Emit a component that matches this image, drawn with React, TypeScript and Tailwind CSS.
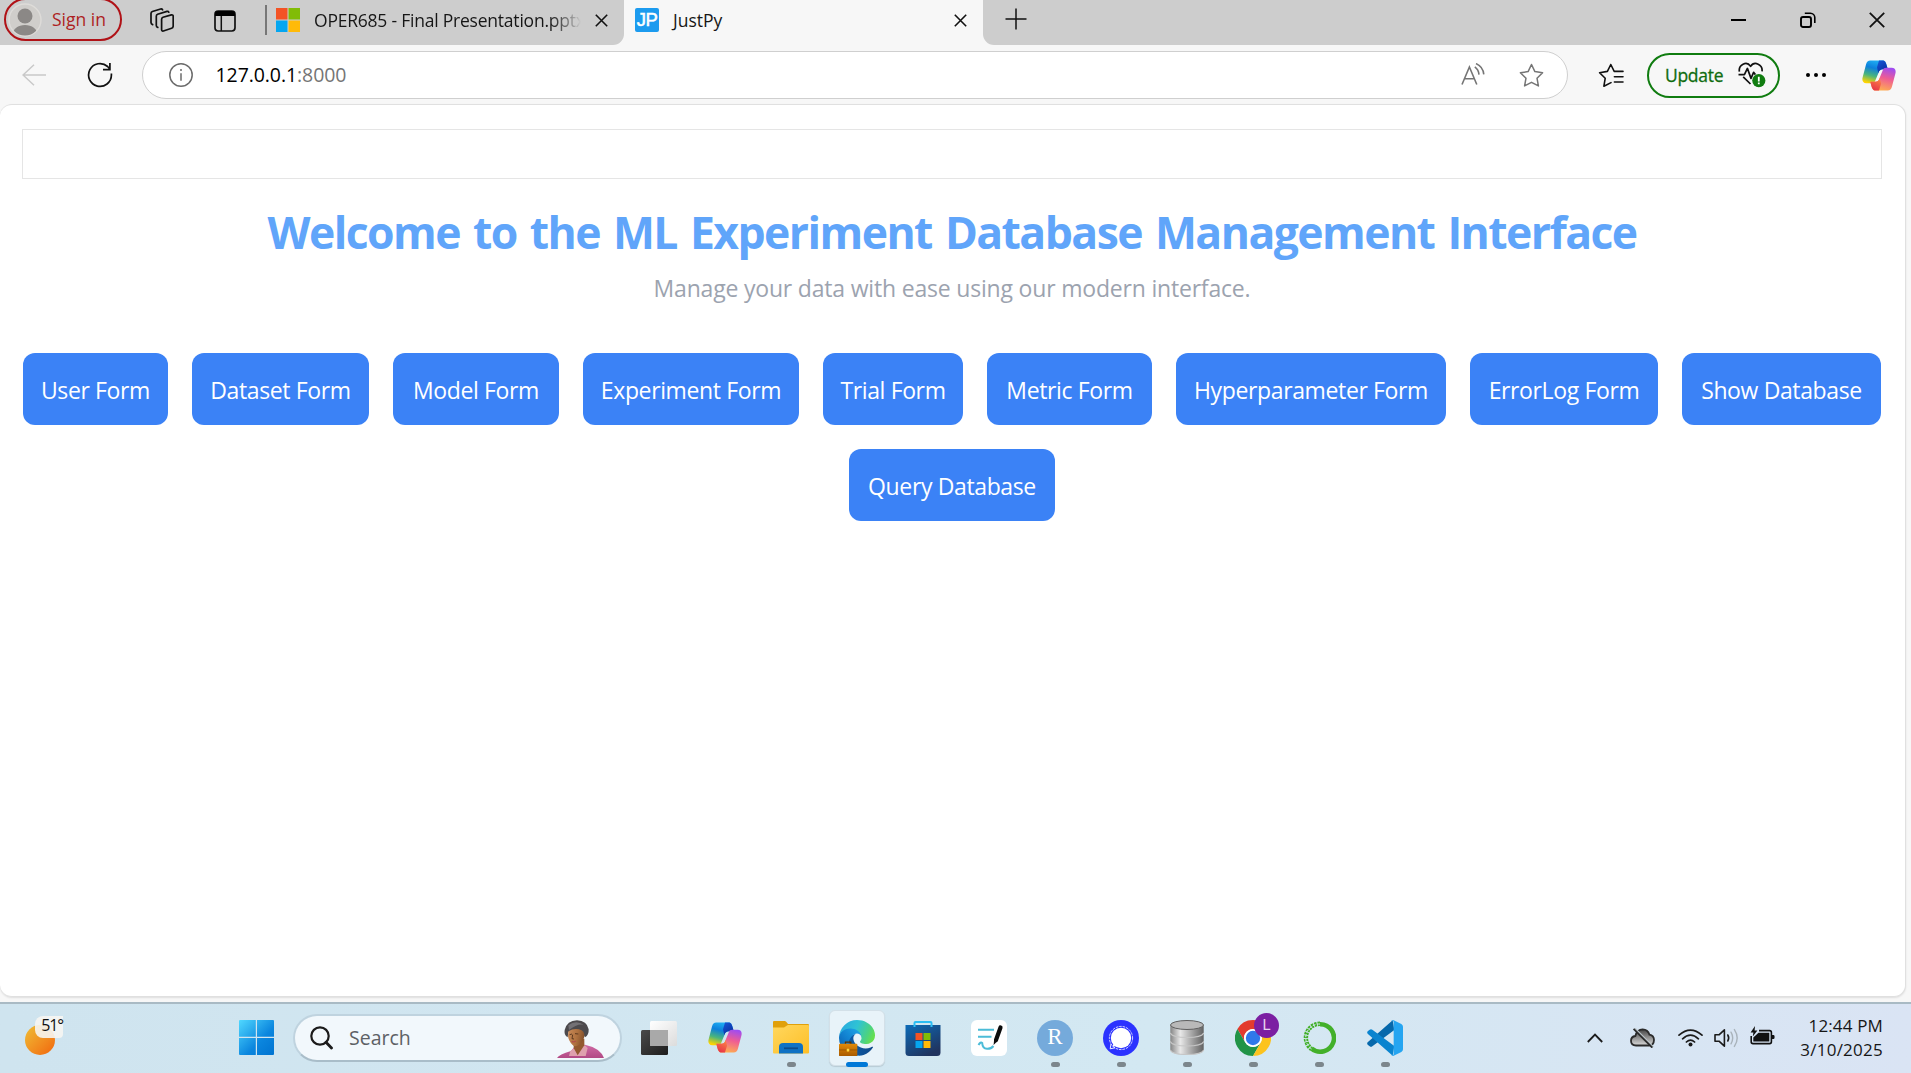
import type { ReactNode } from "react";

const FORMS = [
  { label: "User Form", width: "w-[145px]" },
  { label: "Dataset Form", width: "w-[177px]" },
  { label: "Model Form", width: "w-[166px]" },
  { label: "Experiment Form", width: "w-[216px]" },
  { label: "Trial Form", width: "w-[140px]" },
  { label: "Metric Form", width: "w-[165px]" },
  { label: "Hyperparameter Form", width: "w-[270px]" },
  { label: "ErrorLog Form", width: "w-[188px]" },
  { label: "Show Database", width: "w-[199px]" },
  { label: "Query Database", width: "w-[206px]" },
];

function MicrosoftLogo({ size }: { size: number }) {
  return (
    <svg width={size} height={size} viewBox="0 0 24 24" className="shrink-0">
      <path fill="#f35325" d="M0 0h11.5v11.5H0z" />
      <path fill="#81bc06" d="M12.5 0H24v11.5H12.5z" />
      <path fill="#05a6f0" d="M0 12.5h11.5V24H0z" />
      <path fill="#ffba08" d="M12.5 12.5H24V24H12.5z" />
    </svg>
  );
}

function CopilotLogo({ id }: { id: string }) {
  const ribbon =
    "M24 0H60C68 0 71 5 74 18L76 26H62C54 26 51 29 48 38L39 60C37 66 34 68 28 68H12C2 68 -2 60 1 50L11 12C13 4 17 0 24 0Z";
  const fold = "M50 0H60C68 0 71 5 74 18L76 26H62C54 26 51 29 48 38L44 20Z";
  return (
    <svg width="34" height="31" viewBox="-1 -1 102 92" className="shrink-0">
      <defs>
        <linearGradient id={id + "a"} x1="0.6" y1="0" x2="0.3" y2="1">
          <stop offset="0" stopColor="#1fb0f5" />
          <stop offset="0.35" stopColor="#0d7fdb" />
          <stop offset="0.68" stopColor="#4ab57c" />
          <stop offset="1" stopColor="#ffd400" />
        </linearGradient>
        <linearGradient id={id + "b"} x1="0" y1="0" x2="0.6" y2="1">
          <stop offset="0" stopColor="#1657d8" />
          <stop offset="1" stopColor="#0a2fa0" />
        </linearGradient>
        <linearGradient id={id + "c"} x1="0.3" y1="1" x2="0.6" y2="0">
          <stop offset="0" stopColor="#a04cf0" />
          <stop offset="0.45" stopColor="#ef5d93" />
          <stop offset="1" stopColor="#ffb04f" />
        </linearGradient>
        <linearGradient id={id + "d"} x1="0" y1="1" x2="0.4" y2="0">
          <stop offset="0" stopColor="#ff8b45" />
          <stop offset="1" stopColor="#e83a48" />
        </linearGradient>
      </defs>
      <path d={ribbon} fill={`url(#${id}a)`} />
      <path d={fold} fill={`url(#${id}b)`} />
      <g transform="rotate(180 50 45)">
        <path d={ribbon} fill={`url(#${id}c)`} />
        <path d={fold} fill={`url(#${id}d)`} />
      </g>
    </svg>
  );
}

function CloseIcon({ size, stroke = 1.6 }: { size: number; stroke?: number }) {
  return (
    <svg width={size} height={size} viewBox={`0 0 ${size} ${size}`} className="shrink-0">
      <path d={`M.8.8 ${size - 0.8} ${size - 0.8}M${size - 0.8} .8.8 ${size - 0.8}`} stroke="#111" strokeWidth={stroke} fill="none" />
    </svg>
  );
}

function TabStrip() {
  return (
    <div className="flex h-[45px] items-start bg-[#cdcdcd]">
      <div className="-mt-[2px] ml-1 flex h-[43px] w-[118px] shrink-0 items-center rounded-full border-2 border-[#b01217] pl-[2px]">
        <svg width="34" height="34" viewBox="0 0 34 34" className="shrink-0">
          <defs>
            <clipPath id="avatar">
              <circle cx="17" cy="17" r="15.5" />
            </clipPath>
          </defs>
          <circle cx="17" cy="17" r="16" fill="#d0cecb" stroke="#dedcd9" strokeWidth="1.4" />
          <g clipPath="url(#avatar)" fill="#8b8886">
            <circle cx="17" cy="13" r="7.5" />
            <path d="M4 34c0-8 6-12 13-12s13 4 13 12z" />
          </g>
        </svg>
        <span className="ml-[10px] text-[17.5px] whitespace-nowrap text-[#ad1f23]">Sign in</span>
      </div>
      <svg width="24" height="24" viewBox="0 0 24 24" className="mt-2 ml-[28px] shrink-0" fill="none" stroke="#111" strokeWidth="1.7" strokeLinejoin="round" strokeLinecap="round">
        <path d="M13 9.3 21.4 6.9Q23.2 6.6 23.2 8.3V18Q23.1 19.8 21.6 20.3L13.4 23Q11.7 23.4 11.6 21.8V11.2Q11.7 9.8 13 9.3Z" />
        <path d="M7.8 19.4Q6.3 18.9 6.3 17.4V8.2Q6.3 6.8 7.6 6.3L17 3.4Q18.4 3.1 18.8 4.2" />
        <path d="M2.6 16.6Q1 16 1 14.4V5.4Q1 4 2.4 3.5L10.6 1Q12 .7 12.6 1.8" />
      </svg>
      <svg width="22" height="22" viewBox="0 0 22 22" className="mt-[9.5px] ml-10 shrink-0">
        <rect x="1" y="1" width="20" height="20" rx="3.2" fill="none" stroke="#111" strokeWidth="1.7" />
        <path d="M1 6V4a3 3 0 0 1 3-3h14a3 3 0 0 1 3 3v2z" fill="#000" />
        <path d="M7.3 6v15" stroke="#111" strokeWidth="1.5" />
      </svg>
      <div className="mt-[5px] ml-[29px] h-[30px] w-[1.5px] shrink-0 bg-[#777]" />
      <div className="flex h-10 w-[357.5px] shrink-0 items-center pl-[9.5px]">
        <MicrosoftLogo size={24} />
        <span className="ml-[14px] w-[267px] overflow-hidden bg-linear-to-r from-[#161616] from-88% to-[#cdcdcd] bg-clip-text text-[17.5px] tracking-[-0.22px] whitespace-nowrap text-transparent">
          OPER685 - Final Presentation.pptx
        </span>
        <span className="ml-[14px]">
          <CloseIcon size={13} />
        </span>
      </div>
      <div className="relative flex h-[45px] w-[359px] shrink-0 items-center bg-[#f7f7f7] pb-[5px]">
        <svg width="11" height="11" className="absolute bottom-0 -left-[11px]">
          <path d="M11 0V11H0A11 11 0 0 0 11 0Z" fill="#f7f7f7" />
        </svg>
        <svg width="11" height="11" className="absolute -right-[11px] bottom-0">
          <path d="M0 0V11H11A11 11 0 0 1 0 0Z" fill="#f7f7f7" />
        </svg>
        <span className="ml-[11px] flex h-6 w-6 items-center justify-center rounded-[2px] bg-[#1c9bef] font-['Liberation_Sans'] text-[18.5px] tracking-[-0.5px] text-white [-webkit-text-stroke:0.5px_white]">
          JP
        </span>
        <span className="ml-[14px] w-[281px] text-[17.5px] text-[#161616]">JustPy</span>
        <CloseIcon size={13} />
      </div>
      <svg width="22" height="22" viewBox="0 0 22 22" className="mt-[8px] ml-[22px] shrink-0">
        <path d="M11 .5v21M.5 11h21" stroke="#111" strokeWidth="1.5" />
      </svg>
      <div className="ml-auto flex h-[39px] items-center">
        <span className="flex w-[69px] justify-center">
          <span className="h-[2px] w-[15px] bg-black" />
        </span>
        <span className="flex w-[69px] justify-center">
          <svg width="16" height="16" viewBox="0 0 16 16" fill="none" stroke="#000" strokeWidth="1.9">
            <rect x="1" y="5" width="10" height="10" rx="2" />
            <path d="M4.8 1.2H10.4a4.4 4.4 0 0 1 4.4 4.4V11" strokeWidth="1.6" />
          </svg>
        </span>
        <span className="flex w-[69px] justify-center">
          <CloseIcon size={16} stroke={1.8} />
        </span>
      </div>
    </div>
  );
}

function Toolbar() {
  return (
    <div className="flex h-[59px] items-center bg-[#f7f7f7] pt-px">
      <svg width="25" height="22" viewBox="0 0 25 22" className="ml-[22px] shrink-0" fill="none" stroke="#c9c9c9" strokeWidth="1.5">
        <path d="M24 11H1M12 .8 1 11 12 21.2" />
      </svg>
      <svg width="26" height="26" viewBox="0 0 26 26" className="ml-10 shrink-0" fill="none" stroke="#111" strokeWidth="1.7">
        <path d="M24.4 11.6V13A11.4 11.4 0 1 1 20.6 4.5L22.6 6.7M16 7.6H22.9V1" />
      </svg>
      <div className="ml-[29px] flex h-12 w-[1426px] shrink-0 items-center rounded-full border-[1.5px] border-[#cfcfcf] bg-white pl-[25.5px]">
        <svg width="24" height="24" viewBox="0 0 24 24" className="shrink-0">
          <circle cx="12" cy="12" r="11.2" fill="none" stroke="#6b6b6b" strokeWidth="1.5" />
          <path d="M12 10.2v7.6" stroke="#6b6b6b" strokeWidth="1.5" />
          <circle cx="12" cy="7" r="1" fill="#6b6b6b" />
        </svg>
        <span className="ml-[23px] text-[19.5px] tracking-[-0.08px] text-black">
          127.0.0.1<span className="text-[#757575]">:8000</span>
        </span>
        <svg width="24" height="24" viewBox="0 0 24 24" className="ml-auto shrink-0" fill="none" stroke="#757575" strokeWidth="1.6">
          <path d="M1 21.5 8.4 4 15.8 21.5M3.6 15.8H13.2" />
          <path d="M13.8 3.8Q17.6 6.6 18 11.6M15 .6Q22 3.6 22.8 11.4" />
        </svg>
        <svg width="25" height="25" viewBox="0 0 25 25" className="mr-[23.5px] ml-[34px] shrink-0" fill="none" stroke="#757575" strokeWidth="1.5" strokeLinejoin="round">
          <path d="M12.5 1.5 15.9 8.6 23.6 9.7 18 15.2 19.4 22.9 12.5 19.3 5.6 22.9 7 15.2 1.4 9.7 9.1 8.6Z" />
        </svg>
      </div>
      <svg width="26" height="25" viewBox="0 0 26 25" className="ml-[30px] shrink-0" fill="none" stroke="#111" strokeWidth="1.6" strokeLinejoin="round" strokeLinecap="round">
        <path d="M16.2 8.4 12.8 1.5 9.4 8.4 1.6 9.7 7.2 15.3 5.9 23.2 13 19.6M16.2 8.4H25M16.4 13.7H25M16.4 19H25" />
      </svg>
      <div className="ml-[23px] flex h-[45px] w-[133px] shrink-0 items-center rounded-full border-2 border-[#107c10] pl-[16px]">
        <span className="w-[73px] text-[17.5px] tracking-[-0.3px] text-[#0f6c0f] [-webkit-text-stroke:0.3px_#0f6c0f]">Update</span>
        <svg width="28" height="26" viewBox="0 0 28 26" className="shrink-0" fill="none" stroke="#111" strokeWidth="1.7" strokeLinejoin="round">
          <path d="M1.4 9.6C.2 3 8.6-1.6 12.6 4.4 16.6-1.6 25 3 24 9.4M5.2 14.8 12.5 22" />
          <path d="M.5 12.6H6.4L9.4 6.4 13 16.4 15.6 10.4 17.4 12.6" />
          <circle cx="20.8" cy="18.6" r="6.6" fill="#107c10" stroke="none" />
          <path d="M20.8 14.8V19.4M20.8 20.6V22.2" stroke="#fff" strokeWidth="1.8" />
        </svg>
      </div>
      <svg width="22" height="6" viewBox="0 0 22 6" className="ml-[25px] shrink-0" fill="#000">
        <circle cx="3" cy="3" r="2" />
        <circle cx="11" cy="3" r="2" />
        <circle cx="19" cy="3" r="2" />
      </svg>
      <span className="ml-[35px]">
        <CopilotLogo id="bar" />
      </span>
    </div>
  );
}

function Page() {
  return (
    <div className="h-[898px] bg-[#f7f7f7] pr-[5px]">
      <main className="h-[893px] rounded-xl border-y border-r border-[#e0e0e0] bg-white px-[22px] pt-6 pr-[23px] shadow-[0_1px_2px_rgba(0,0,0,0.1)]">
        <div className="h-[50px] w-[1860px] border border-[#e5e5e5]" />
        <h1 className="mt-[23px] text-center text-[44.5px] leading-[60px] font-bold tracking-[-1.55px] whitespace-nowrap text-[#60a5fa] [word-spacing:3px]">
          Welcome to the ML Experiment Database Management Interface
        </h1>
        <p className="mt-2 text-center text-[23px] leading-9 tracking-[-0.19px] text-[#9ca3af]">
          Manage your data with ease using our modern interface.
        </p>
        <div className="mt-[47px] flex flex-wrap justify-center gap-6">
          {FORMS.map((form) => (
            <button
              key={form.label}
              className={`${form.width} h-[72px] shrink-0 rounded-xl bg-[#3b82f6] pt-[3px] text-[23px] tracking-[-0.37px] whitespace-nowrap text-white`}
            >
              {form.label}
            </button>
          ))}
        </div>
      </main>
    </div>
  );
}

function TaskItem({ children, state }: { children: ReactNode; state?: "running" | "active" }) {
  return (
    <div className="relative flex h-full w-[66px] shrink-0 items-center justify-center">
      <div className={state === "active" ? "flex h-14 w-14 items-center justify-center rounded-md border border-[#d3e0e8] bg-[#e8f3f9] shadow-[0_1px_1px_rgba(0,0,0,0.12)]" : "flex"}>
        {children}
      </div>
      {state === "running" && <span className="absolute bottom-[4px] left-[29px] h-[5px] w-[9px] rounded-full bg-[#7c868c]" />}
      {state === "active" && <span className="absolute bottom-[4px] left-[22px] h-[5px] w-[22px] rounded-full bg-[#0078d7]" />}
    </div>
  );
}

function WindowsLogo() {
  return (
    <svg width="35" height="35" viewBox="0 0 35 35" className="shrink-0">
      <defs>
        <linearGradient id="win" x1="0" y1="0" x2="1" y2="1">
          <stop offset="0" stopColor="#50d8ff" />
          <stop offset="0.6" stopColor="#0b86de" />
          <stop offset="1" stopColor="#0073d0" />
        </linearGradient>
      </defs>
      <path fill="url(#win)" d="M1 0H16.8V16.8H0V1Q0 0 1 0ZM18 0H34Q35 0 35 1V16.8H18ZM0 18H16.8V35H1Q0 35 0 34ZM18 18H35V34Q35 35 34 35H18Z" />
    </svg>
  );
}

function SearchPortrait() {
  return (
    <svg width="47" height="38" viewBox="0 0 141 114" className="shrink-0">
      <defs>
        <linearGradient id="coat" x1="0" y1="0" x2="0" y2="1">
          <stop offset="0" stopColor="#cf6aa4" />
          <stop offset="1" stopColor="#b24a85" />
        </linearGradient>
        <linearGradient id="face" x1="0" y1="0" x2="1" y2="0.2">
          <stop offset="0" stopColor="#c98a58" />
          <stop offset="0.6" stopColor="#ae713f" />
          <stop offset="1" stopColor="#87532c" />
        </linearGradient>
      </defs>
      <path d="M0 114Q6 104 42 93L54 78 84 74Q130 84 141 114Z" fill="url(#coat)" />
      <path d="M40 93 52 84 60 100 82 74 92 84 86 108H36Z" fill="#dfa0ae" />
      <path d="M50 62 82 56V76L62 106 50 84Z" fill="#93592f" />
      <path d="M23 30Q30 2 60 1 90 2 95 28 96 46 84 52L74 34 34 36 32 52Q20 46 23 30Z" fill="#4c4a4d" />
      <path d="M34 34Q50 24 66 28 84 32 82 50 78 66 64 76 54 82 46 74 34 62 33 48Z" fill="url(#face)" />
      <path d="M38 44l7-2M54 41l10 1M47 44l-2 12 6 1" stroke="#4f2f18" strokeWidth="2.6" fill="none" />
      <path d="M44 64q6 4 13-1" stroke="#b0504a" strokeWidth="4" fill="none" />
      <path d="M34 16Q56-2 80 14 60 10 36 30Z" fill="#737175" />
    </svg>
  );
}

function TaskViewIcon() {
  return (
    <svg width="36" height="34" viewBox="0 0 36 34">
      <defs>
        <linearGradient id="tvd" x1="0" y1="0" x2="1" y2="1">
          <stop offset="0" stopColor="#4a4a4a" />
          <stop offset="1" stopColor="#1d1d1d" />
        </linearGradient>
        <linearGradient id="tvl" x1="0" y1="0" x2="1" y2="1">
          <stop offset="0" stopColor="#fff" />
          <stop offset="1" stopColor="#dcdcdc" />
        </linearGradient>
      </defs>
      <rect y="9" width="27" height="25" rx="1.5" fill="url(#tvd)" />
      <rect x="9" width="27" height="25" rx="1.5" fill="url(#tvl)" />
      <path d="M9 9H27V25H10Q9 25 9 24Z" fill="#a9a9a9" />
    </svg>
  );
}

function FolderIcon() {
  return (
    <svg width="36" height="33" viewBox="0 0 36 33">
      <defs>
        <linearGradient id="fold" x1="0" y1="0" x2="1" y2="1">
          <stop offset="0" stopColor="#ffd75e" />
          <stop offset="1" stopColor="#fdbf27" />
        </linearGradient>
      </defs>
      <path d="M1 0H11.5Q12.5 0 13.2.8L15 3H35Q36 3 36 4V12H0V1Q0 0 1 0Z" fill="#e0a00b" />
      <path d="M0 6.5H11L14.8 4H35Q36 4 36 5V31.5Q36 32.5 35 32.5H1Q0 32.5 0 31.5Z" fill="url(#fold)" />
      <path d="M6 32.5V26Q6 22 10 22H26Q30 22 30 26V32.5Z" fill="#0f72c4" />
      <path d="M11 27.3H25" stroke="#0a4c8c" strokeWidth="1.8" />
    </svg>
  );
}

function EdgeIcon() {
  return (
    <svg width="36" height="36" viewBox="0 0 256 256">
      <defs>
        <linearGradient id="ed1" x1="0.2" y1="0.5" x2="1" y2="0.6">
          <stop offset="0" stopColor="#0c59a4" />
          <stop offset="1" stopColor="#114a8b" />
        </linearGradient>
        <linearGradient id="ed2" x1="0.8" y1="0.2" x2="0.2" y2="0.9">
          <stop offset="0" stopColor="#1b9de2" />
          <stop offset="0.5" stopColor="#1180cf" />
          <stop offset="1" stopColor="#0a5fb0" />
        </linearGradient>
        <linearGradient id="ed3" x1="0" y1="0.3" x2="1" y2="0.6">
          <stop offset="0" stopColor="#2aa9e0" />
          <stop offset="0.45" stopColor="#2fc3d4" />
          <stop offset="0.8" stopColor="#4bd283" />
          <stop offset="1" stopColor="#66e04c" />
        </linearGradient>
        <linearGradient id="case" x1="0" y1="0" x2="0" y2="1">
          <stop offset="0" stopColor="#e38b08" />
          <stop offset="1" stopColor="#a85a00" />
        </linearGradient>
      </defs>
      <path fill="url(#ed1)" d="M235.68 190.54c-3.46 1.82-7.04 3.42-10.69 4.83a101.39 101.39 0 0 1-35.63 6.43c-46.95 0-87.84-32.29-87.84-73.74a31.15 31.15 0 0 1 16.3-27.04C75.35 102.8 64.43 147.05 64.43 172.98c0 73.31 67.57 80.75 82.13 80.75 7.85 0 19.69-2.29 26.8-4.54l1.3-.43a128.34 128.34 0 0 0 66.61-52.76 4.02 4.02 0 0 0-5.59-5.46Z" />
      <path fill="url(#ed2)" d="M105.73 241.42a79.2 79.2 0 0 1-22.74-21.34 80.93 80.93 0 0 1 29.5-120.19c3.12-1.47 8.45-4.12 15.54-3.99a32.35 32.35 0 0 1 25.69 13 31.88 31.88 0 0 1 6.36 18.66c0-.21 24.46-79.6-80-79.6-43.9 0-80 41.66-80 78.21a130.15 130.15 0 0 0 12.11 56 128 128 0 0 0 156.38 67.11 75.55 75.55 0 0 1-62.78-7.89Z" />
      <path fill="url(#ed3)" d="M152.33 148.86c-.81 1.05-3.3 2.5-3.3 5.66 0 2.61 1.7 5.12 4.72 7.23 14.38 10 41.49 8.68 41.56 8.68a59.56 59.56 0 0 0 30.27-8.35 61.38 61.38 0 0 0 30.43-52.88c.26-22.41-8-37.31-11.34-43.91C223.44 23.84 177.72 0 128 0A128 128 0 0 0 0 126.2c.48-36.54 36.8-66.05 80-66.05 3.5 0 23.46.34 42 10.07 16.34 8.58 24.9 18.94 30.85 29.21 6.18 10.67 7.28 24.15 7.28 29.52 0 5.37-2.74 13.33-7.8 19.91Z" />
      <path d="M46 170V158H84V170" fill="none" stroke="#5b3200" strokeWidth="9" />
      <rect y="168" width="130" height="88" rx="6" fill="url(#case)" />
      <path d="M0 213H130" stroke="#8a4a00" strokeWidth="5" />
      <rect x="55" y="204" width="18" height="20" rx="3" fill="#ffd73d" />
    </svg>
  );
}

function StoreIcon() {
  return (
    <svg width="36" height="36" viewBox="0 0 36 36">
      <defs>
        <linearGradient id="store" x1="0" y1="0" x2="0.6" y2="1">
          <stop offset="0" stopColor="#0d6cb8" />
          <stop offset="1" stopColor="#20345f" />
        </linearGradient>
      </defs>
      <path d="M.5 5H35.5V32.5Q35.5 36 32 36H4Q.5 36 .5 32.5Z" fill="url(#store)" />
      <path d="M9.5 7V3Q9.5 2 10.5 2H25.5Q26.5 2 26.5 3V7" fill="none" stroke="#2cbdf3" strokeWidth="2" />
      <path fill="#f35325" d="M10.5 13h7v7h-7z" />
      <path fill="#81bc06" d="M18.5 13h7v7h-7z" />
      <path fill="#05a6f0" d="M10.5 21h7v7h-7z" />
      <path fill="#ffba08" d="M18.5 21h7v7h-7z" />
    </svg>
  );
}

function NotesIcon() {
  return (
    <svg width="36" height="36" viewBox="0 0 36 36">
      <rect width="36" height="36" rx="6" fill="#fff" />
      <path d="M7 9.8H23M7 16.8H20.5M7.5 25Q9.5 21.5 11.2 23 11.5 28.6 16 28.8 20 29 22.5 26" fill="none" stroke="#4cbcd8" strokeWidth="2" />
      <path d="M29.5 7.5 25 20" stroke="#0c0c0c" strokeWidth="4.2" strokeLinecap="round" />
      <path d="M23.2 19 22.6 25 27 20.4Z" fill="#0c0c0c" />
    </svg>
  );
}

function SignalIcon() {
  return (
    <svg width="36" height="36" viewBox="0 0 36 36">
      <circle cx="18" cy="18" r="18" fill="#2b32ff" />
      <circle cx="18" cy="18" r="10.2" fill="#fff" />
      <path d="M11 23 9.4 26.8 14 26Z" fill="#fff" />
      <circle cx="18" cy="18" r="11.6" fill="none" stroke="#fff" strokeWidth=".8" strokeDasharray="2.6 .9" />
      <path d="M8 24 7.2 28.8 12 27.8" fill="none" stroke="#fff" strokeWidth=".9" />
    </svg>
  );
}

function DatabaseIcon() {
  return (
    <svg width="34" height="35" viewBox="0 0 34 35">
      <defs>
        <linearGradient id="db" x1="0" y1="0" x2="1" y2="0">
          <stop offset="0" stopColor="#858585" />
          <stop offset="0.3" stopColor="#e8e8e8" />
          <stop offset="1" stopColor="#616161" />
        </linearGradient>
      </defs>
      {[22, 13.5, 5].map((y) => (
        <g key={y} transform={`translate(0 ${y})`}>
          <path d="M.3 0V8Q2 12.5 17 12.5T33.7 8V0Z" fill="url(#db)" />
          <path d="M.3 8Q2 12.5 17 12.5T33.7 8" fill="none" stroke="#c6c6c6" strokeWidth="1.1" />
        </g>
      ))}
      <ellipse cx="17" cy="5" rx="16.5" ry="4.5" fill="#b9b9b9" stroke="#5f5f5f" strokeWidth="1" />
    </svg>
  );
}

function ChromeIcon() {
  return (
    <div className="relative">
      <svg width="36" height="36" viewBox="0 0 48 48">
        <path fill="#e33b2e" d="M44.785 12A24 24 0 0 0 3.215 12L13.61 30A12 12 0 0 1 24 12Z" />
        <path fill="#219447" d="M3.215 12A24 24 0 0 0 24 48L34.39 30A12 12 0 0 1 13.61 30Z" />
        <path fill="#fcc31e" d="M24 48A24 24 0 0 0 44.785 12H24A12 12 0 0 1 34.39 30Z" />
        <circle cx="24" cy="24" r="12" fill="#fff" />
        <circle cx="24" cy="24" r="9.6" fill="#2f78ea" />
      </svg>
      <span className="absolute -top-[7px] left-[19px] flex h-[25px] w-[25px] items-center justify-center rounded-full bg-[#7b1fa2] font-[Roboto] text-[15px] text-[#e6d3ee]">L</span>
    </div>
  );
}

function CondaIcon() {
  return (
    <svg width="33" height="34" viewBox="0 0 33 34">
      <path d="M17 3.3A13.7 13.7 0 1 1 8.5 27.5" fill="none" stroke="#43b02a" strokeWidth="4.6" />
      <path d="M17 2.8A14 14 0 0 0 8.5 28" fill="none" stroke="#43b02a" strokeWidth="4.4" strokeDasharray="2.4 .9" />
      <path d="M17 3A13.8 13.8 0 0 0 8.5 28" fill="none" stroke="#d3e7f0" strokeWidth="1" strokeDasharray="3 1.6" />
    </svg>
  );
}

function VsCodeIcon() {
  return (
    <svg width="36" height="36" viewBox="0 0 108 108">
      <path d="M77 1 82 30 16 79Q12 82 8 79L2 74Q-1 70 2 67Z" fill="#0668ab" />
      <path d="M77 107 82 78 16 29Q12 26 8 29L2 34Q-1 38 2 41Z" fill="#0a84cf" />
      <path d="M80 1 103 12Q108 15 108 20V88Q108 93 103 96L80 107Q75 109 72 105 80 110 80 100V8Q80-2 72 3 76-1 80 1Z" fill="#25a5f1" />
    </svg>
  );
}

function Taskbar() {
  return (
    <div className="flex h-[71px] items-center border-t-2 border-[#a9bac4] bg-linear-to-r from-[#cfe4ef] via-[#d3e8f2] via-60% to-[#dae4f4] pb-[2px]">
      <div className="relative ml-6 h-[44px] w-10 shrink-0">
        <div className="absolute top-[9px] left-[1px] h-[30px] w-[30px] rounded-full bg-linear-to-br from-[#edbd35] to-[#f0640a]" />
        <div className="absolute top-0 left-[11px] flex h-[22px] w-[28px] items-center justify-end rounded-l-lg rounded-br-sm bg-[#f6f5f2]/90 pb-[4px] text-[16px] tracking-[-1.1px] text-[#111]">
          51°
        </div>
      </div>
      <div className="ml-[175px]">
        <WindowsLogo />
      </div>
      <div className="ml-[19px] flex h-[48px] w-[329px] shrink-0 items-center rounded-full border-2 border-[#bfd3df] border-b-[#a9bdc9] bg-[#f2f8fc] pl-[15px]">
        <svg width="23" height="24" viewBox="0 0 23 24" fill="none" stroke="#1b1b1b" strokeWidth="2.2" strokeLinecap="round">
          <circle cx="10" cy="10" r="8.7" />
          <path d="M16 16.2 21.5 22" strokeWidth="2.8" />
        </svg>
        <span className="ml-[16px] text-[19.5px] text-[#5d6165]">Search</span>
        <span className="mt-[2px] mr-[16px] ml-auto">
          <SearchPortrait />
        </span>
      </div>
      <div className="ml-1 flex h-full">
        <TaskItem><TaskViewIcon /></TaskItem>
        <TaskItem><CopilotLogo id="task" /></TaskItem>
        <TaskItem state="running"><FolderIcon /></TaskItem>
        <TaskItem state="active"><EdgeIcon /></TaskItem>
        <TaskItem><StoreIcon /></TaskItem>
        <TaskItem><NotesIcon /></TaskItem>
        <TaskItem state="running">
          <span className="flex h-9 w-9 items-center justify-center rounded-full bg-[#75aadb] font-['Liberation_Serif'] text-[23px] text-white">R</span>
        </TaskItem>
        <TaskItem state="running"><SignalIcon /></TaskItem>
        <TaskItem state="running"><DatabaseIcon /></TaskItem>
        <TaskItem state="running"><ChromeIcon /></TaskItem>
        <TaskItem state="running"><CondaIcon /></TaskItem>
        <TaskItem state="running"><VsCodeIcon /></TaskItem>
      </div>
      <div className="mr-[28px] ml-auto flex items-center">
        <svg width="16" height="10" viewBox="0 0 16 10" fill="none" stroke="#1b1b1b" strokeWidth="1.8">
          <path d="M.8 9 8 1.6 15.2 9" />
        </svg>
        <svg width="25" height="20" viewBox="0 0 25 20" className="ml-[27px]">
          <defs>
            <linearGradient id="cloud" x1="0" y1="0" x2="0" y2="1">
              <stop offset="0" stopColor="#444" />
              <stop offset="1" stopColor="#d9d9d9" />
            </linearGradient>
          </defs>
          <path d="M6 17.5Q1 17.5 1 12.8 1 8.6 5.4 8 7 1.5 12.6 1.4 17.8 1.6 19.4 6.6 24 7.4 24 12 23.8 17.3 19 17.5Z" fill="url(#cloud)" stroke="#2b2b2b" strokeWidth="1.8" />
          <path d="M4.8 .2 23.3 19" stroke="#bcc6cc" strokeWidth="1.6" />
          <path d="M3.6 .8 22.3 19.6" stroke="#2b2b2b" strokeWidth="1.9" />
        </svg>
        <svg width="25" height="18" viewBox="0 0 25 18" className="ml-[23px]" fill="none" stroke="#1b1b1b" strokeWidth="1.7" strokeLinecap="round">
          <path d="M1 6.2Q12.5-4 24 6.2M4.6 9.8Q12.5 2.6 20.4 9.8M8.4 13Q12.5 9.2 16.6 13" />
          <circle cx="12.5" cy="15.6" r="2" fill="#1b1b1b" stroke="none" />
        </svg>
        <svg width="25" height="20" viewBox="0 0 25 20" className="ml-[11px]" fill="none" stroke="#1b1b1b" strokeWidth="1.6" strokeLinecap="round" strokeLinejoin="round">
          <path d="M1 6.8H5L10.4 1.8V18.2L5 13.2H1Z" />
          <path d="M13.8 7Q15.6 10 13.8 13" />
          <path d="M17 4.2Q20.4 10 17 15.8M20.4 1.6Q26 10 20.4 18.4" stroke="#a9b3bb" strokeWidth="1.4" />
        </svg>
        <svg width="25" height="20" viewBox="0 0 25 20" className="-mt-1 ml-[11px]">
          <path d="M9 4.6H19.6Q21.4 4.6 21.4 6.4V15.8Q21.4 17.6 19.6 17.6H3Q1.2 17.6 1.2 15.8V10" fill="none" stroke="#111" strokeWidth="1.6" />
          <path d="M8.5 6.8H19.3V15.4H3.3V11.6Z" fill="#111" />
          <path d="M22 9H23.6Q24.6 9 24.6 11T23.6 13H22Z" fill="#111" />
          <path d="M5 0 .6 6.4H3.4L2.8 10.6 7.4 4.6H4.6Z" fill="#111" />
        </svg>
        <div className="ml-[25px] text-right text-[17px] leading-6 text-[#161616]">
          <div className="tracking-[0.15px]">12:44 PM</div>
          <div className="tracking-[0.25px]">3/10/2025</div>
        </div>
      </div>
    </div>
  );
}

export default function App() {
  return (
    <div className="h-[1073px] w-[1911px] overflow-hidden font-['Open_Sans',sans-serif]">
      <TabStrip />
      <Toolbar />
      <Page />
      <Taskbar />
    </div>
  );
}
